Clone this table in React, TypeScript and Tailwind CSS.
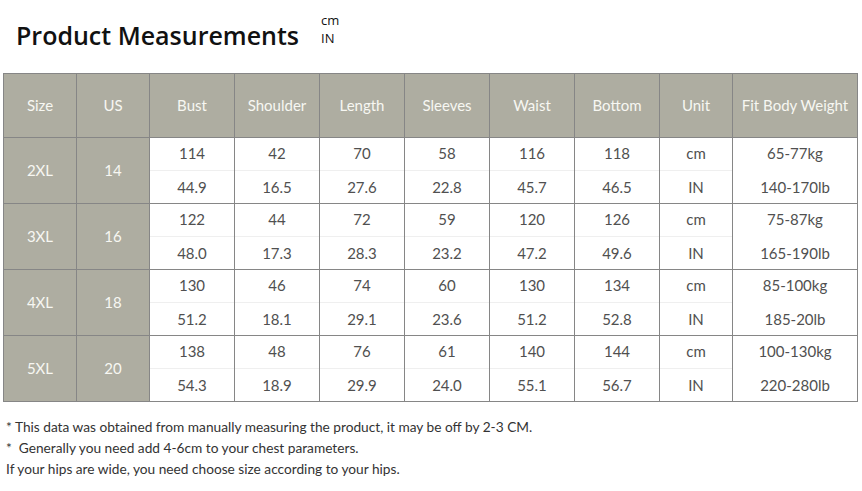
const HEADERS = ['Size', 'US', 'Bust', 'Shoulder', 'Length', 'Sleeves', 'Waist', 'Bottom', 'Unit', 'Fit Body Weight']

interface SizeRow {
  size: string
  us: string
  // [cm, inch] pairs for Bust, Shoulder, Length, Sleeves, Waist, Bottom
  values: [string, string][]
  weight: [string, string]
}

const ROWS: SizeRow[] = [
  {
    size: '2XL',
    us: '14',
    values: [['114', '44.9'], ['42', '16.5'], ['70', '27.6'], ['58', '22.8'], ['116', '45.7'], ['118', '46.5']],
    weight: ['65-77kg', '140-170lb'],
  },
  {
    size: '3XL',
    us: '16',
    values: [['122', '48.0'], ['44', '17.3'], ['72', '28.3'], ['59', '23.2'], ['120', '47.2'], ['126', '49.6']],
    weight: ['75-87kg', '165-190lb'],
  },
  {
    size: '4XL',
    us: '18',
    values: [['130', '51.2'], ['46', '18.1'], ['74', '29.1'], ['60', '23.6'], ['130', '51.2'], ['134', '52.8']],
    weight: ['85-100kg', '185-20lb'],
  },
  {
    size: '5XL',
    us: '20',
    values: [['138', '54.3'], ['48', '18.9'], ['76', '29.9'], ['61', '24.0'], ['140', '55.1'], ['144', '56.7']],
    weight: ['100-130kg', '220-280lb'],
  },
]

function PairCell({ top, bottom, divided = true }: { top: string; bottom: string; divided?: boolean }) {
  return (
    <div className="flex flex-col bg-white text-[#505050]">
      <div className="flex h-[32px] items-center justify-center pb-[2px]">{top}</div>
      <div className={divided ? 'h-px bg-[#efefef]' : 'h-px bg-white'} />
      <div className="flex h-[32px] items-center justify-center">{bottom}</div>
    </div>
  )
}

export default function App() {
  return (
    <div className="h-[491px] w-[862px] overflow-hidden bg-white font-['Lato','Open_Sans',sans-serif]">
      <div className="flex h-[73px] items-start pl-[16px]">
        <h1 className="mt-[19px] font-['Open_Sans',sans-serif] text-[25px] font-semibold leading-[32px] text-[#111]">
          Product Measurements
        </h1>
        <div className="ml-[22px] mt-[11px] font-['Open_Sans',sans-serif] text-[13px] leading-[18px] text-[#111]">
          <div>cm</div>
          <div>IN</div>
        </div>
      </div>

      <div className="ml-[3px] grid w-fit grid-cols-[72px_72px_84px_84px_84px_84px_84px_84px_72px_124px] gap-px border border-[#868686] bg-[#868686] text-[15px]">
        {HEADERS.map((header) => (
          <div key={header} className="flex h-[63px] items-center justify-center bg-[#aeada1] text-[#f7f7f2]">
            {header}
          </div>
        ))}
        {ROWS.map((row) => (
          <div key={row.size} className="contents">
            <div className="flex h-[65px] items-center justify-center bg-[#aeada1] text-[#f7f7f2]">{row.size}</div>
            <div className="flex h-[65px] items-center justify-center bg-[#aeada1] text-[#f7f7f2]">{row.us}</div>
            {row.values.map(([cm, inch], index) => (
              <PairCell key={index} top={cm} bottom={inch} />
            ))}
            <PairCell top="cm" bottom="IN" />
            <PairCell top={row.weight[0]} bottom={row.weight[1]} divided={false} />
          </div>
        ))}
      </div>

      <div className="mt-[14px] pl-[6px] text-[13.7px] leading-[21px] text-[#333]">
        <p>* This data was obtained from manually measuring the product, it may be off by 2-3 CM.</p>
        <p>*&nbsp; Generally you need add 4-6cm to your chest parameters.</p>
        <p>If your hips are wide, you need choose size according to your hips.</p>
      </div>
    </div>
  )
}
